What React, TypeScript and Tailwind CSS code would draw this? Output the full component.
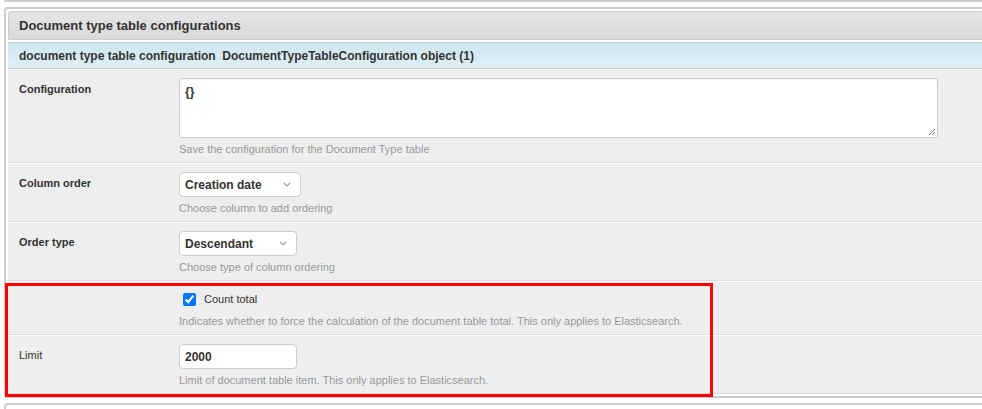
import React from "react";

function Chevron() {
  return (
    <svg width="8" height="5" viewBox="0 0 8 5" className="ml-auto">
      <path d="M0.8 0.8 L4 3.8 L7.2 0.8" fill="none" stroke="#8a8a8a" strokeWidth="1.1" />
    </svg>
  );
}

function Row({ label, bold = true, children, help }: { label: string; bold?: boolean; children: React.ReactNode; help: string }) {
  return (
    <div className="flex border-t border-t-white border-b border-b-[#dddddd] pl-[11px] pt-[8px] pb-[6px]">
      <div className={`w-[160px] shrink-0 pt-[5px] text-[11px] leading-[13px] text-[#333] ${bold ? "font-bold" : ""}`}>{label}</div>
      <div className="flex flex-col">
        {children}
        <div className="mt-[5px] text-[11px] leading-[13px] text-[#999]">{help}</div>
      </div>
    </div>
  );
}

function FakeSelect({ value, width }: { value: string; width: string }) {
  return (
    <div className={`flex h-[25px] items-center rounded-[4px] border border-[#cccccc] bg-white pl-[5px] pr-[9px] text-[12px] font-bold text-[#333] ${width}`}>
      <span>{value}</span>
      <Chevron />
    </div>
  );
}

export default function App() {
  return (
    <div className="relative h-[409px] w-[982px] overflow-hidden bg-white" style={{ fontFamily: '"Liberation Sans", Arial, sans-serif' }}>
      <div className="ml-[4px] h-[2px] w-[1000px] bg-[#cccccc]" />
      <div className="ml-[4px] mt-[5px] w-[1000px] rounded-[4px] border-2 border-[#cccccc] bg-white p-[2px]">
        <div className="flex h-[29px] items-center rounded-t-[3px] border border-[#cccccc] bg-gradient-to-b from-[#e6e6e6] to-[#d9d9d9] pl-[10px] text-[13px] font-bold text-[#333]">
          Document type table configurations
        </div>
        <div className="mt-[2px] flex h-[27px] items-center border-t border-b border-[#cccccc] bg-gradient-to-b from-[#cde7f0] to-[#e0eff7] pl-[11px] text-[12px] font-bold text-[#333]">
          document type table configuration&nbsp; DocumentTypeTableConfiguration object (1)
        </div>
        <div className="bg-[#eeeeee]">
          <Row label="Configuration" help="Save the configuration for the Document Type table">
            <div className="relative h-[60px] w-[759px] rounded-[3px] border border-[#cccccc] bg-white px-[5px] pt-[6px] text-[12px] font-bold leading-[14px] text-[#333] shadow-[inset_0_1px_2px_rgba(0,0,0,0.06)]">
              {"{}"}
              <svg width="9" height="9" viewBox="0 0 9 9" className="absolute bottom-[1px] right-[1px]">
                <path d="M8 2 L2 8 M8 5 L5 8" stroke="#777" strokeWidth="1" />
              </svg>
            </div>
          </Row>
          <Row label="Column order" help="Choose column to add ordering">
            <FakeSelect value="Creation date" width="w-[122px]" />
          </Row>
          <Row label="Order type" help="Choose type of column ordering">
            <FakeSelect value="Descendant" width="w-[118px]" />
          </Row>
          <div className="flex border-t border-t-white border-b border-b-[#dddddd] pl-[11px] pt-[8px] pb-[6px]">
            <div className="w-[160px] shrink-0" />
            <div className="flex flex-col">
              <label className="flex h-[19px] items-center text-[11px] text-[#333]">
                <input type="checkbox" checked readOnly className="m-0 ml-[4px] mr-[8px] h-[13px] w-[13px]" />
                Count total
              </label>
              <div className="mt-[6px] text-[11px] leading-[13px] text-[#999]">
                Indicates whether to force the calculation of the document table total. This only applies to Elasticsearch.
              </div>
            </div>
          </div>
          <Row label="Limit" bold={false} help="Limit of document table item. This only applies to Elasticsearch.">
            <div className="flex h-[25px] w-[118px] items-center rounded-[4px] border border-[#cccccc] bg-white pl-[5px] text-[12px] font-bold text-[#333]">
              2000
            </div>
          </Row>
        </div>
      </div>
      <div className="ml-[4px] mt-[5px] h-[10px] w-[1000px] rounded-t-[4px] border-2 border-b-0 border-[#cccccc]" />
      <div className="absolute left-[5px] top-[283px] h-[114px] w-[708px] border-[3px] border-[#ff0000]" />
    </div>
  );
}
